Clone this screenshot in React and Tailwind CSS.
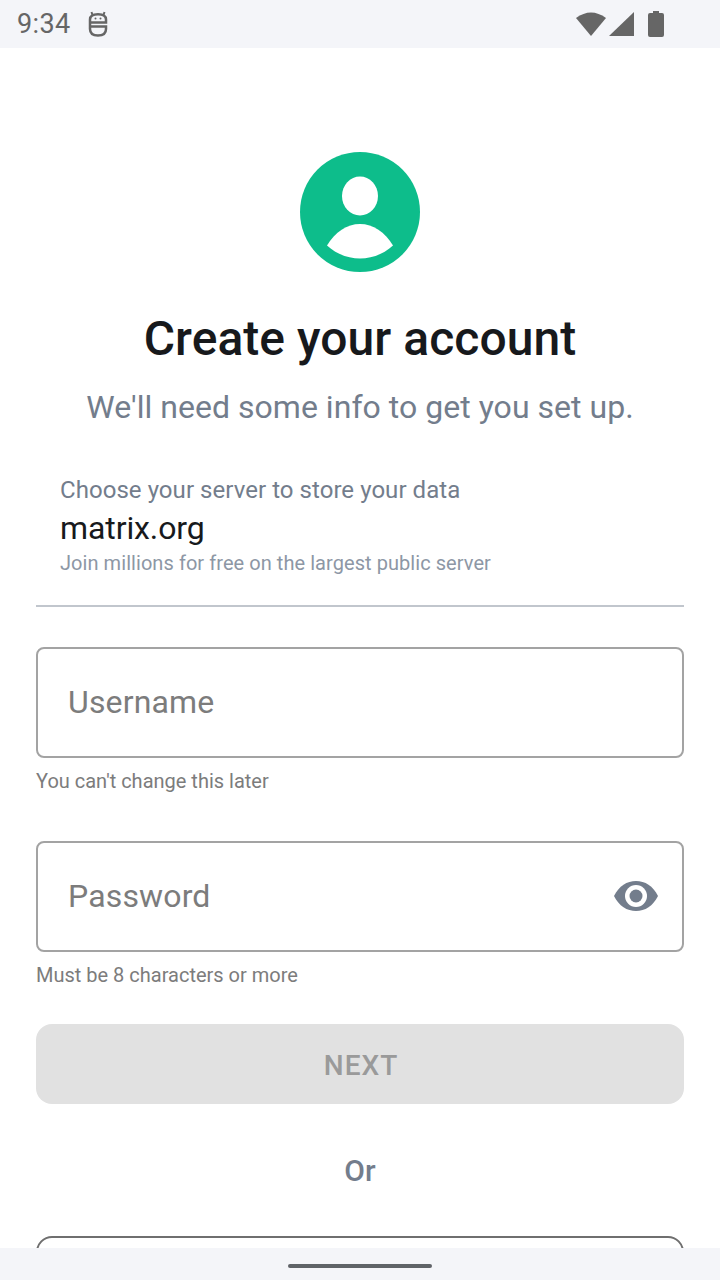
const ROBOTO = { fontFamily: 'Roboto, sans-serif' };

const StatusBar = () => (
  <div className="h-12 shrink-0 bg-[#f4f5f9] flex items-center pl-[17px] pr-[56px] text-[#666666]">
    <span className="text-[27px] leading-none tracking-[0.4px] mr-[17px]">9:34</span>
    <svg width="20" height="26" viewBox="0 0 20 26" fill="none" stroke="#666666" strokeWidth="2.5">
      <path d="M2 11.5 H18 V8.5 Q18 3.2 10 3.2 Q2 3.2 2 8.5 V18 Q2 24.5 10 24.5 Q18 24.5 18 18 V15.5 H2" />
      <path d="M4.5 4 L3.5 1 M15.5 4 L16.5 1" strokeWidth="2" />
      <circle cx="7.5" cy="7.5" r="1" fill="#666666" stroke="none" />
      <circle cx="12.5" cy="7.5" r="1" fill="#666666" stroke="none" />
    </svg>
    <div className="ml-auto flex items-center">
      <svg width="30" height="26" viewBox="0 0 30 26" fill="#666666">
        <path d="M0 7 Q15 -4 30 7 L15 25 Z" />
      </svg>
      <svg width="25" height="26" viewBox="0 0 25 26" fill="#666666" className="ml-[3px]">
        <path d="M25 1 V25 H0 Z" />
      </svg>
      <svg width="16" height="26" viewBox="0 0 16 26" fill="#666666" className="ml-[14px]">
        <path d="M5 0 H11 V2 H14 a2 2 0 0 1 2 2 V24 a2 2 0 0 1 -2 2 H2 a2 2 0 0 1 -2 -2 V4 a2 2 0 0 1 2 -2 H5 Z" />
      </svg>
    </div>
  </div>
);

const Field = ({ label, hint, children }) => (
  <div>
    <div className="h-[111px] rounded-lg border-2 border-[#a3a3a3] flex items-center justify-between pl-[30px] pr-[24px]">
      <span className="text-[32px] tracking-[0.15px] text-[#7c7c7c] -mt-[2px]">{label}</span>
      {children}
    </div>
    <p className="mt-[11px] text-[20px] leading-[24px] text-[#7c7c7c]">{hint}</p>
  </div>
);

const App = () => {
  return (
    <div className="w-[720px] h-[1280px] flex flex-col bg-white overflow-hidden" style={ROBOTO}>
      <StatusBar />
      <div className="flex-1 min-h-0 overflow-hidden px-9 pt-[104px]">
        <div className="flex justify-center">
          <svg width="120" height="120" viewBox="0 0 120 120">
            <circle cx="60" cy="60" r="60" fill="#0dbd8b" />
            <ellipse cx="60" cy="44" rx="18" ry="19.5" fill="#fff" />
            <path d="M27 93.5 C35 80 47 72 60 72 C73 72 85 80 93 93.5 C84 102 72 106.5 60 106.5 C48 106.5 36 102 27 93.5 Z" fill="#fff" />
          </svg>
        </div>
        <h1 className="mt-[39px] text-center text-[48px] leading-[56px] font-medium tracking-[0.05px] text-[#17191c]">Create your account</h1>
        <p className="mt-[20px] text-center text-[32px] leading-[40px] tracking-[0.03px] text-[#737d8c]">We'll need some info to get you set up.</p>
        <div className="mt-[47px] pl-6 pb-[28px] border-b-2 border-[#c1c6cd]">
          <p className="text-[24px] leading-[32px] tracking-[0.05px] text-[#737d8c]">Choose your server to store your data</p>
          <p className="mt-[2px] text-[32px] leading-[40px] tracking-[-0.1px] text-[#17191c]">matrix.org</p>
          <p className="mt-[1px] text-[20px] leading-[28px] tracking-[0.06px] text-[#8d97a5]">Join millions for free on the largest public server</p>
        </div>
        <div className="mt-[40px]">
          <Field label="Username" hint="You can't change this later" />
        </div>
        <div className="mt-[48px]">
          <Field label="Password" hint="Must be 8 characters or more">
            <svg width="44" height="30" viewBox="0 0 44 30" className="-mt-[2px]">
              <path d="M0 15 C5 5 13 0 22 0 C31 0 39 5 44 15 C39 25 31 30 22 30 C13 30 5 25 0 15 Z" fill="#737d8c" />
              <circle cx="22" cy="15" r="11" fill="#fff" />
              <circle cx="22" cy="15" r="6.5" fill="#737d8c" />
            </svg>
          </Field>
        </div>
        <button className="mt-[37px] w-full h-20 rounded-2xl bg-[#e1e1e1] pt-[4px] pl-[2px] text-[28px] font-medium tracking-[1px] text-[#9a9a9a]">NEXT</button>
        <p className="mt-[47px] text-center text-[30px] leading-[40px] font-medium text-[#737d8c]">Or</p>
        <div className="mt-[45px] h-[80px] rounded-2xl border-2 border-[#6f6f6f]" />
      </div>
      <div className="h-8 shrink-0 bg-[#f4f5f9] flex justify-center pt-[16px]">
        <div className="w-[144px] h-1 rounded-full bg-[#5f6368]" />
      </div>
    </div>
  );
};

export default App;
